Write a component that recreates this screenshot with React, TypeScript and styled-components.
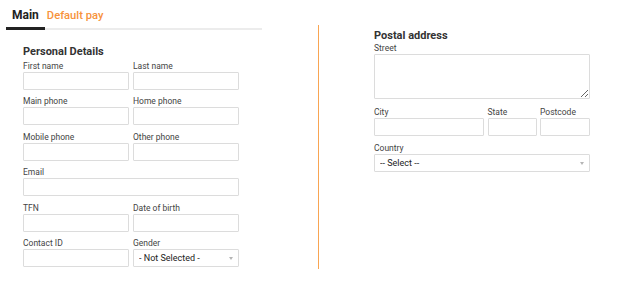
import React from 'react';
import styled, { createGlobalStyle } from 'styled-components';

const GlobalStyle = createGlobalStyle`
  body {
    margin: 0;
    background: #ffffff;
    font-family: Roboto, 'Liberation Sans', sans-serif;
    color: #333333;
  }
`;

const Page = styled.div`
  display: flex;
  width: 640px;
  height: 294px;
`;

const LeftPanel = styled.div`
  width: 318px;
  flex-shrink: 0;
`;

const TabBar = styled.div`
  display: flex;
  width: 256px;
  height: 28px;
  margin-left: 6px;
  border-bottom: 2px solid #ececec;
`;

const Tab = styled.div<{ active?: boolean }>`
  box-sizing: border-box;
  display: flex;
  align-items: center;
  height: 30px;
  margin-bottom: -2px;
  padding: 3px 6px 0;
  padding-left: ${(p) => (p.active ? '6px' : '2px')};
  font-size: ${(p) => (p.active ? '12px' : '11.2px')};
  font-weight: ${(p) => (p.active ? 700 : 500)};
  color: ${(p) => (p.active ? '#222222' : '#f7923b')};
  border-bottom: 3px solid ${(p) => (p.active ? '#222222' : 'transparent')};
`;

const Section = styled.div`
  width: 216px;
  margin-left: 23px;
`;

const Heading = styled.div`
  height: 15px;
  font-size: 11px;
  font-weight: 700;
  line-height: 15px;
  color: #333333;
`;

const Grid = styled.div<{ cols: string }>`
  display: grid;
  grid-template-columns: ${(p) => p.cols};
  column-gap: 4px;
  row-gap: 6.5px;
`;

const Field = styled.div<{ span?: number }>`
  display: flex;
  flex-direction: column;
  grid-column: span ${(p) => p.span || 1};
`;

const Label = styled.label`
  height: 11px;
  font-size: 8.5px;
  line-height: 11px;
  color: #444444;
  white-space: nowrap;
`;

const Input = styled.input`
  display: block;
  box-sizing: border-box;
  width: 100%;
  height: 18px;
  margin: 0;
  padding: 0 5px;
  border: 1px solid #dcdcdc;
  border-radius: 1px;
  font-family: inherit;
  font-size: 9px;
  background: #ffffff;
`;

const TextArea = styled.textarea`
  display: block;
  box-sizing: border-box;
  width: 100%;
  height: 45px;
  margin: 0;
  padding: 3px 5px;
  border: 1px solid #dcdcdc;
  border-radius: 1px;
  font-family: inherit;
  font-size: 9px;
`;

const SelectWrap = styled.div`
  position: relative;
  height: 18px;
`;

const Select = styled.select`
  display: block;
  box-sizing: border-box;
  width: 100%;
  height: 18px;
  margin: 0;
  padding: 0 5px;
  border: 1px solid #dcdcdc;
  border-radius: 1px;
  appearance: none;
  background: #ffffff;
  font-family: inherit;
  font-size: 9px;
  color: #222222;
`;

const Caret = styled.span`
  position: absolute;
  top: 8px;
  right: 6px;
  width: 0;
  height: 0;
  border-left: 2.5px solid transparent;
  border-right: 2.5px solid transparent;
  border-top: 3px solid #b5b5b5;
  pointer-events: none;
`;

const RightPanel = styled.div`
  box-sizing: border-box;
  height: 244px;
  margin-top: 25px;
  padding: 2.5px 0 0 55px;
  border-left: 1px solid #f9a552;
`;

const AddressGrid = styled(Grid)`
  column-gap: 3.5px;
`;

function SelectField({ value }: { value: string }) {
  return (
    <SelectWrap>
      <Select defaultValue={value}>
        <option>{value}</option>
      </Select>
      <Caret />
    </SelectWrap>
  );
}

function App() {
  const personal: { label: string; span?: number; select?: string }[] = [
    { label: 'First name' },
    { label: 'Last name' },
    { label: 'Main phone' },
    { label: 'Home phone' },
    { label: 'Mobile phone' },
    { label: 'Other phone' },
    { label: 'Email', span: 2 },
    { label: 'TFN' },
    { label: 'Date of birth' },
    { label: 'Contact ID' },
    { label: 'Gender', select: '- Not Selected -' },
  ];

  return (
    <Page>
      <GlobalStyle />
      <LeftPanel>
        <TabBar>
          <Tab active>Main</Tab>
          <Tab>Default pay</Tab>
        </TabBar>
        <Section style={{ marginTop: 13.5 }}>
          <Heading>Personal Details</Heading>
          <Grid cols="106px 106px" style={{ marginTop: 2 }}>
            {personal.map((f) => (
              <Field key={f.label} span={f.span}>
                <Label>{f.label}</Label>
                {f.select ? <SelectField value={f.select} /> : <Input />}
              </Field>
            ))}
          </Grid>
        </Section>
      </LeftPanel>
      <RightPanel>
        <Section style={{ marginLeft: 0 }}>
          <Heading>Postal address</Heading>
          <Field>
            <Label>Street</Label>
            <TextArea />
          </Field>
          <AddressGrid cols="110px 49px 50px" style={{ marginTop: 8.5 }}>
            <Field>
              <Label>City</Label>
              <Input />
            </Field>
            <Field>
              <Label>State</Label>
              <Input />
            </Field>
            <Field>
              <Label>Postcode</Label>
              <Input />
            </Field>
            <Field span={3}>
              <Label>Country</Label>
              <SelectField value="-- Select --" />
            </Field>
          </AddressGrid>
        </Section>
      </RightPanel>
    </Page>
  );
}

export default App;
